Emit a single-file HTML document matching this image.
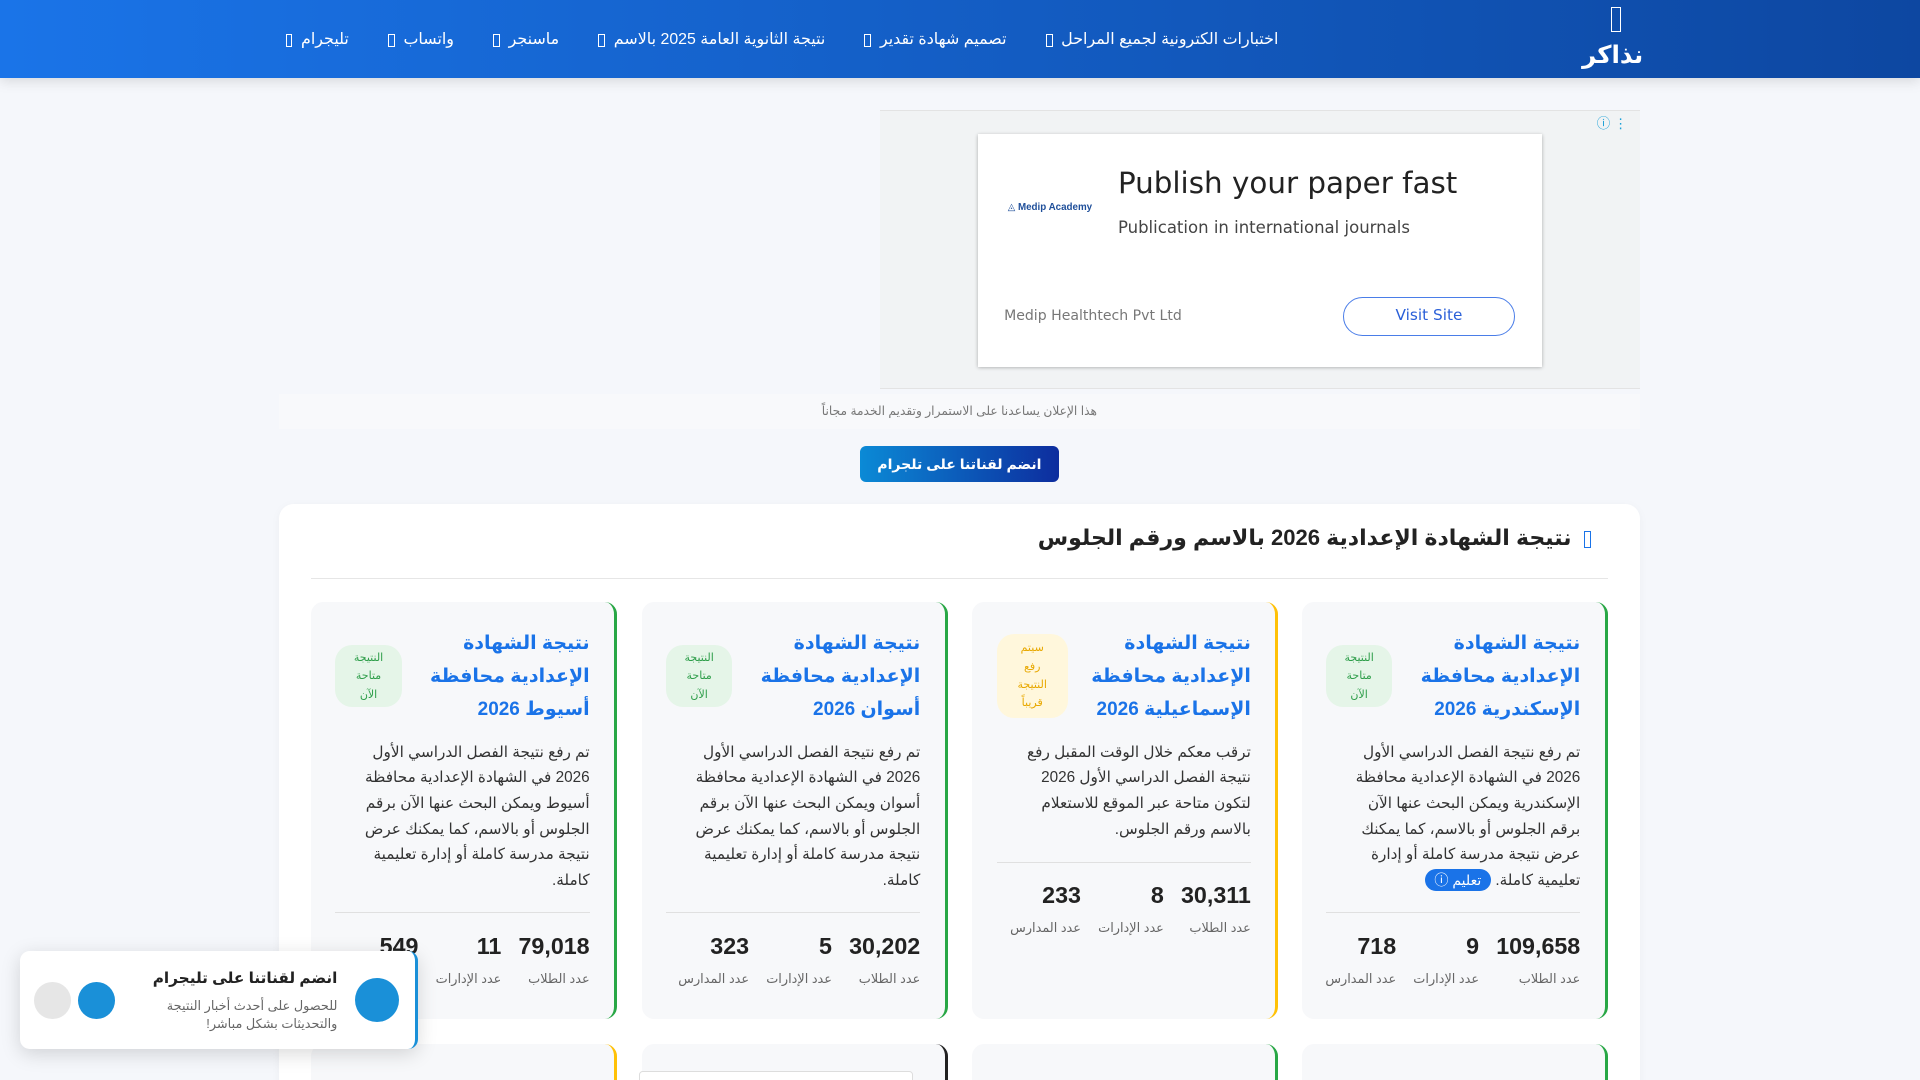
<!DOCTYPE html>
<html lang="ar" dir="rtl"><head><meta charset="utf-8"><style>
html{zoom:1.22449;overflow:hidden;height:882px}
*{box-sizing:border-box;margin:0;padding:0}
body{width:1568px;height:882px;overflow:hidden;background:#f5f7fb;font-family:"Liberation Sans","DejaVu Sans",sans-serif;position:relative;color:#333}
.hdr{position:absolute;left:0;top:0;width:1568px;height:64px;background:linear-gradient(90deg,#1a74e8,#0d47a1);box-shadow:0 3px 10px rgba(0,0,0,.12)}
.logo{position:absolute;left:1298px;top:4px;width:44px;text-align:center;color:#fff;font-weight:bold;font-size:20px}
.logo .ic{display:block;width:8px;height:20px;border:1.5px solid #fff;margin:2px auto 7px}
.nav{position:absolute;right:524px;top:24px;display:flex;gap:32px;color:#fff;font-size:13px;white-space:nowrap}
.nav span::after{content:"";display:inline-block;width:4px;height:9px;border:1px solid #fff;margin-right:7px;vertical-align:middle}
.ad{position:absolute;left:719px;top:90px;width:620px;height:228px;background:#f1f3f4;border-top:1px solid #e3e3e3;border-bottom:1px solid #e3e3e3}
.adc{position:absolute;left:80px;top:19px;width:460px;height:190px;background:#fff;box-shadow:0 1px 3px rgba(0,0,0,.3)}
.adc h3{position:absolute;left:114px;top:26px;font-weight:normal;color:#222;white-space:nowrap;font-family:"DejaVu Sans",sans-serif;font-size:24px}
.adc p{position:absolute;left:114px;top:68px;font-size:13.5px;color:#444;white-space:nowrap;font-family:"DejaVu Sans",sans-serif}
.adc .co{position:absolute;left:21px;top:142px;font-size:11.5px;color:#777;font-family:"DejaVu Sans",sans-serif}
.adc .btn{position:absolute;left:298px;top:133px;width:140px;height:32px;border:1.5px solid #4a7de8;border-radius:16px;color:#2a5fd8;text-align:center;line-height:29px;font-size:12.5px;font-family:"DejaVu Sans",sans-serif}
.adc .lg{position:absolute;left:24px;top:55px;font-size:8px;color:#1f4f9a;font-weight:bold}
.note{position:absolute;left:228px;top:322px;width:1111px;height:28px;background:#f8f9fb;text-align:center;font-size:10px;color:#777;line-height:28px}
.tg{position:absolute;left:702px;top:364px;width:163px;height:30px;border-radius:5px;background:linear-gradient(90deg,#0b8ad6,#0d2d9e);color:#fff;font-weight:bold;font-size:11.5px;text-align:center;line-height:30px}
.main{position:absolute;left:228px;top:412px;width:1111px;height:500px;background:#fff;border-radius:12px;box-shadow:0 2px 8px rgba(0,0,0,.04);overflow:hidden}
.main h2{position:absolute;right:40px;top:17px;font-size:18px;color:#222;white-space:nowrap}
.main h2::before{content:"";display:inline-block;width:4px;height:13px;border:1.5px solid #1a73e8;margin-left:10px;vertical-align:middle}
.main .ln{position:absolute;left:26px;right:26px;top:60px;border-top:1px solid #e6e6e6}
.card{position:absolute;top:80px;width:250px;height:340px;background:#f7f8fa;border-radius:10px;border-right:3px solid #28a745;padding:20px 20px 0 20px}
.card.y{border-right-color:#ffc107}.card.k{border-right-color:#222}
.ct{position:absolute;right:20px;top:20px;width:158px;font-size:15.5px;font-weight:bold;color:#1a73e8;line-height:27px}
.bd{position:absolute;left:20px;top:35px;width:54px;height:50px;border-radius:14px;background:#e5f5e8;color:#2e9e4a;font-size:9px;line-height:15px;text-align:center;padding-top:3px}
.bd.y{background:#fff7dc;color:#e8a800;top:26px;height:68px;width:58px;padding-top:4px}
.ds{position:absolute;right:20px;top:112px;width:196px;font-size:12.5px;line-height:21px;color:#333}
.hr{position:absolute;left:20px;right:20px;border-top:1.5px solid #e0e0e0}
.st{position:absolute;right:20px;display:flex;gap:14px;direction:rtl}
.st div{text-align:right}
.st b{display:block;font-size:19px;color:#222}
.st i{display:block;font-style:normal;font-size:10.5px;color:#666;margin-top:9px}
.pill{display:inline-block;background:#1a73e8;color:#fff;border-radius:9px;padding:0 8px;font-size:11.5px;line-height:18px}
.pop{position:absolute;left:16px;top:777px;width:325px;height:80px;background:#fff;border-radius:8px;border-right:3px solid #1a90d8;box-shadow:0 4px 16px rgba(0,0,0,.15)}
.pop .c1{position:absolute;left:274px;top:22px;width:36px;height:36px;border-radius:50%;background:#1a90d8}
.pop .c2{position:absolute;left:48px;top:25px;width:30px;height:30px;border-radius:50%;background:#1a90d8}
.pop .c3{position:absolute;left:12px;top:25px;width:30px;height:30px;border-radius:50%;background:#e6e6e6}
.pop h4{position:absolute;right:63px;top:14px;font-size:12.5px;color:#222;white-space:nowrap}
.pop p{position:absolute;right:63px;top:37px;font-size:10.5px;color:#666;line-height:15px;width:160px}
</style></head><body>
<div class="hdr">
<div class="logo"><span class="ic"></span>نذاكر</div>
<div class="nav"><span>اختبارات الكترونية لجميع المراحل</span><span>تصميم شهادة تقدير</span><span>نتيجة الثانوية العامة 2025 بالاسم</span><span>ماسنجر</span><span>واتساب</span><span>تليجرام</span></div>
</div>
<div class="ad" dir="ltr"><span style="position:absolute;right:10px;top:1px;color:#1aa0d8;font-size:11px">ⓘ ⋮</span>
<div class="adc"><div class="lg">◬ Medip Academy</div><h3>Publish your paper fast</h3><p>Publication in international journals</p><div class="co">Medip Healthtech Pvt Ltd</div><div class="btn">Visit Site</div></div></div>
<div class="note">هذا الإعلان يساعدنا على الاستمرار وتقديم الخدمة مجاناً</div>
<div class="tg">انضم لقناتنا على تلجرام</div>
<div class="main">
<h2>نتيجة الشهادة الإعدادية 2026 بالاسم ورقم الجلوس</h2><div class="ln"></div>

<div class="card" style="left:835px"><div class="ct">نتيجة الشهادة الإعدادية محافظة الإسكندرية 2026</div><div class="bd">النتيجة<br>متاحة<br>الآن</div>
<div class="ds">تم رفع نتيجة الفصل الدراسي الأول 2026 في الشهادة الإعدادية محافظة الإسكندرية ويمكن البحث عنها الآن برقم الجلوس أو بالاسم، كما يمكنك عرض نتيجة مدرسة كاملة أو إدارة تعليمية كاملة. <span class="pill">تعليم ⓘ</span></div>
<div class="hr" style="top:253px"></div><div class="st" style="top:270px"><div><b>109,658</b><i>عدد الطلاب</i></div><div><b>9</b><i>عدد الإدارات</i></div><div><b>718</b><i>عدد المدارس</i></div></div></div>

<div class="card y" style="left:566px"><div class="ct">نتيجة الشهادة الإعدادية محافظة الإسماعيلية 2026</div><div class="bd y">سيتم<br>رفع<br>النتيجة<br>قريباً</div>
<div class="ds">ترقب معكم خلال الوقت المقبل رفع نتيجة الفصل الدراسي الأول 2026 لتكون متاحة عبر الموقع للاستعلام بالاسم ورقم الجلوس.</div>
<div class="hr" style="top:212px"></div><div class="st" style="top:228px"><div><b>30,311</b><i>عدد الطلاب</i></div><div><b>8</b><i>عدد الإدارات</i></div><div><b>233</b><i>عدد المدارس</i></div></div></div>

<div class="card" style="left:296px"><div class="ct">نتيجة الشهادة الإعدادية محافظة أسوان 2026</div><div class="bd">النتيجة<br>متاحة<br>الآن</div>
<div class="ds">تم رفع نتيجة الفصل الدراسي الأول 2026 في الشهادة الإعدادية محافظة أسوان ويمكن البحث عنها الآن برقم الجلوس أو بالاسم، كما يمكنك عرض نتيجة مدرسة كاملة أو إدارة تعليمية كاملة.</div>
<div class="hr" style="top:253px"></div><div class="st" style="top:270px"><div><b>30,202</b><i>عدد الطلاب</i></div><div><b>5</b><i>عدد الإدارات</i></div><div><b>323</b><i>عدد المدارس</i></div></div></div>

<div class="card" style="left:26px"><div class="ct">نتيجة الشهادة الإعدادية محافظة أسيوط 2026</div><div class="bd">النتيجة<br>متاحة<br>الآن</div>
<div class="ds">تم رفع نتيجة الفصل الدراسي الأول 2026 في الشهادة الإعدادية محافظة أسيوط ويمكن البحث عنها الآن برقم الجلوس أو بالاسم، كما يمكنك عرض نتيجة مدرسة كاملة أو إدارة تعليمية كاملة.</div>
<div class="hr" style="top:253px"></div><div class="st" style="top:270px"><div><b>79,018</b><i>عدد الطلاب</i></div><div><b>11</b><i>عدد الإدارات</i></div><div><b>549</b><i>عدد المدارس</i></div></div></div>

<div class="card" style="left:835px;top:441px;height:60px"></div>
<div class="card" style="left:566px;top:441px;height:60px"></div>
<div class="card k" style="left:296px;top:441px;height:60px"><div style="position:absolute;left:-2px;top:22px;width:224px;height:10px;border:1px solid #ddd;border-radius:3px;background:#fff"></div></div>
<div class="card y" style="left:26px;top:441px;height:60px"></div>
</div>
<div class="pop"><div class="c1"></div><div class="c2"></div><div class="c3"></div><h4>انضم لقناتنا على تليجرام</h4><p>للحصول على أحدث أخبار النتيجة والتحديثات بشكل مباشر!</p></div>
</body></html>
